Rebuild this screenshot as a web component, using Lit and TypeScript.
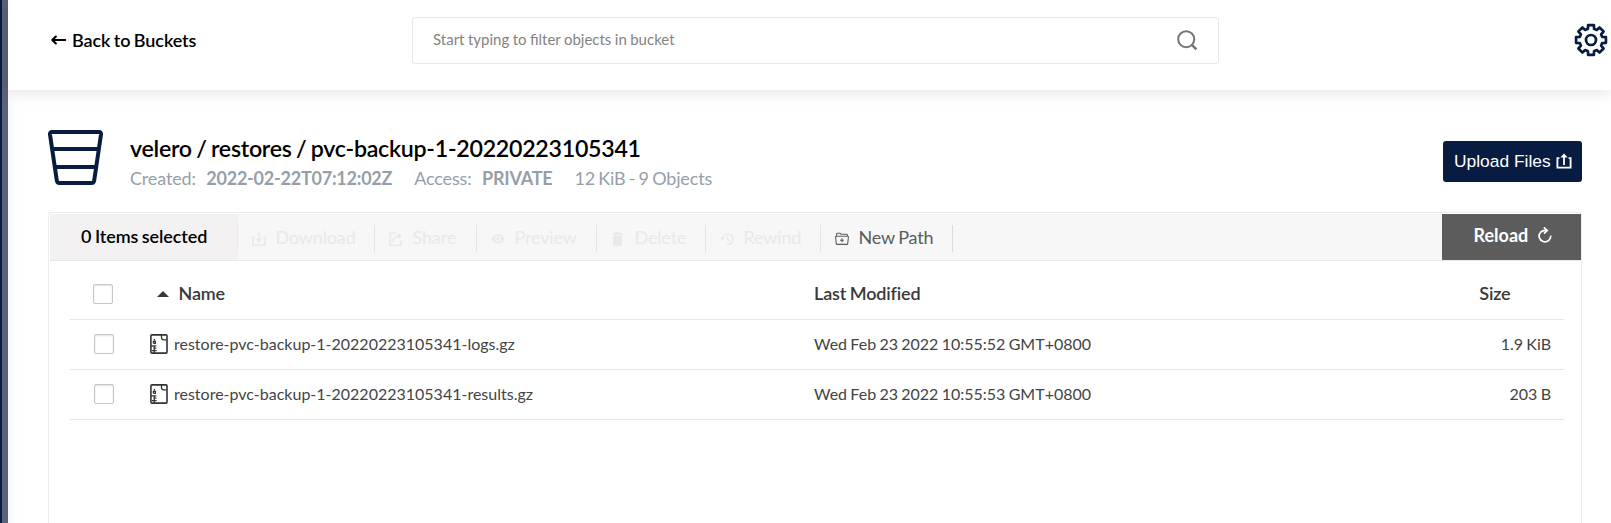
import { LitElement, html, css, svg } from "lit";
import { customElement, property } from "lit/decorators.js";

const gearPath = (() => {
  const pts: string[] = [];
  for (let i = 0; i < 8; i++) {
    const a = (i * Math.PI) / 4;
    const at = (r: number, d: number) =>
      `${(17 + r * Math.sin(a + d)).toFixed(2)} ${(17 - r * Math.cos(a + d)).toFixed(2)}`;
    pts.push(at(11.6, -0.27), at(15.2, -0.19), at(15.2, 0.19), at(11.6, 0.27));
  }
  return `M${pts.join("L")}Z`;
})();

const icons: Record<string, unknown> = {
  back: svg`<svg width="16" height="12" viewBox="0 0 16 12" fill="none" stroke="#000" stroke-width="2.1" stroke-linecap="round" stroke-linejoin="round"><path d="M14.2 6H2M4.8 2.6L1.3 6L4.8 9.4"/></svg>`,
  search: svg`<svg width="21" height="21" viewBox="0 0 21 21" fill="none" stroke="#757575" stroke-width="2"><circle cx="9.2" cy="9.2" r="8"/><path d="M14.6 14.6L19.4 19.4" stroke-width="2.4"/></svg>`,
  gear: svg`<svg width="34" height="34" viewBox="0 0 34 34" fill="none" stroke="#081c42" stroke-width="2.7" stroke-linejoin="round"><path d=${gearPath}/><circle cx="17" cy="17" r="5"/></svg>`,
  bucket: svg`<svg width="55" height="55" viewBox="0 0 55 55" fill="none" stroke="#081c42" stroke-width="4" stroke-linejoin="round"><path d="M4 2H51Q53.3 2 53 4.5L46.2 50.5Q45.8 53 43.5 53H11.5Q9.2 53 8.8 50.5L2 4.5Q1.7 2 4 2ZM5 19H50M8 37H47"/></svg>`,
  upload: svg`<svg width="16" height="16" viewBox="0 0 16 16" fill="none" stroke="#fff" stroke-width="1.8"><path d="M3.4 5.2H1.4V14.6H14.6V5.2H12.6M8 12V2"/><path d="M4.4 4.6L8 .4L11.6 4.6Z" fill="#fff" stroke="none"/></svg>`,
  reload: svg`<svg width="14" height="16" viewBox="0 0 14 16" fill="none" stroke="#fff" stroke-width="1.7"><path d="M2.6 5.2A5.8 5.8 0 1 0 12.7 8.6"/><path d="M2.4 5.4Q4 3.4 8 3.4"/><path d="M5.8 .4L9.2 3.5L6 6.6" /></svg>`,
  download: svg`<svg width="14" height="14" viewBox="0 0 14 14" fill="none" stroke="currentColor" stroke-width="1.6"><path d="M2.8 5.5H.8V13.2H13.2V5.5H11.2M7 .5V8"/><path d="M3.8 6.8H10.2L7 10.6Z" fill="currentColor" stroke="none"/></svg>`,
  share: svg`<svg width="14" height="14" viewBox="0 0 14 14" fill="none" stroke="currentColor" stroke-width="1.4"><path d="M7 .9H1V13.2H12V8.5M3.2 10.5Q4 4.2 11 4"/><path d="M9 .8L13.4 4L9 7.4Z" fill="currentColor" stroke="none"/></svg>`,
  preview: svg`<svg width="14" height="14" viewBox="0 0 14 14"><path fill="currentColor" fill-rule="evenodd" d="M.3 7Q2.5 2.4 7 2.4T13.7 7Q11.5 11.6 7 11.6T.3 7ZM7 4A3 3 0 1 0 7 10A3 3 0 1 0 7 4Z"/><circle cx="7" cy="7" r="1.8" fill="currentColor"/></svg>`,
  delete: svg`<svg width="14" height="14" viewBox="0 0 14 14" fill="currentColor"><path d="M4.3 0H8.9L9.5 1H11.7V2.8H1.5V1H3.7ZM2.1 3.6H11.1V12.4Q11.1 14 9.5 14H3.7Q2.1 14 2.1 12.4Z"/></svg>`,
  rewind: svg`<svg width="14" height="14" viewBox="0 0 14 14" fill="none" stroke="currentColor" stroke-width="1.4"><path d="M2.3 7A5.3 5.3 0 1 1 6.5 12.4M7.4 3.8V7.4L10 9"/><path d="M0 5.8H4.8L2.4 8.8Z" fill="currentColor" stroke="none"/></svg>`,
  folder: svg`<svg width="14" height="14" viewBox="0 0 14 14" fill="none" stroke="currentColor" stroke-width="1.1"><path d="M1.6 4.3V2.2Q1.6 1.3 2.5 1.3H5L6 2.3H11.6Q12.4 2.3 12.4 3.2V4.3M1.2 4.3H12.8Q13.5 4.3 13.4 5L12.7 11.6Q12.6 12.4 11.8 12.4H2.2Q1.4 12.4 1.3 11.6L.6 5Q.5 4.3 1.2 4.3ZM7 6.3V10.3M5 8.3H9" /></svg>`,
  file: svg`<svg width="18" height="20" viewBox="0 0 18 20" fill="none" stroke="#333" stroke-width="1.6"><path d="M2 .9H16Q17 .9 17 2V18Q17 19.1 16 19.1H2Q.9 19.1 .9 18V2Q.9 .9 2 .9Z"/><path d="M11.5 1V3.6Q11.5 5.8 13.7 5.8H16.6" stroke-width="1.3"/><path d="M4.4 5V6.6M3.4 9.2V7.4H5.4V9.4H3.4M1 11.9H6.4M4.2 11.9V19M4.2 14.2H6.4M2 16.6H6.6" stroke-width="1.3"/></svg>`,
};

@customElement("tool-item")
class ToolItem extends LitElement {
  @property() icon = "";
  @property() label = "";
  static styles = css`
    :host { display: block; height: 27px; margin-top: 11px; border-right: 1px solid #e5e5e5; box-sizing: border-box; color: #e9e9e9; font-size: 18px; letter-spacing: -0.15px; word-spacing: -1px; }
    :host([active]) { color: #5c5c5c; border-color: #dcdcdc; }
    .in { display: flex; align-items: center; height: 27px; padding-left: 14px; gap: 9.5px; white-space: nowrap; }
    svg { display: block; flex: none; }
    .t { line-height: 25px; padding-bottom: 2px; }
  `;
  render() {
    return html`<div class="in">${icons[this.icon]}<span class="t">${this.label}</span></div>`;
  }
}

@customElement("app-root")
class AppRoot extends LitElement {
  static styles = css`
    :host { display: flex; height: 523px; width: 100%; overflow: hidden; background: #fff; font-family: Lato, sans-serif; color: #000; box-sizing: border-box; }
    * { box-sizing: border-box; }
    svg { display: block; flex: none; }
    .rail { width: 8px; flex: none; background: #5b6179; border-left: 2px solid #081c42; }
    .main { flex: 1; min-width: 0; display: flex; flex-direction: column; background: linear-gradient(90deg, #f8f8f8, #fefefe 8px, #fff 12px); }
    header { height: 90px; flex: none; display: flex; background: #fff; box-shadow: 0 3px 14px rgba(0,0,0,.11); padding-left: 43px; }
    .back { width: 361px; height: 80px; display: flex; align-items: center; gap: 5px; font-size: 18px; font-weight: 600; letter-spacing: -0.08px; word-spacing: -1px; white-space: nowrap; }
    .search { width: 807px; height: 47px; margin-top: 17px; border: 1px solid #e5e9e9; border-radius: 3px; display: flex; align-items: center; justify-content: space-between; padding: 0 20px 1px 20px; font-size: 15px; word-spacing: -0.4px; color: #838383; }
    .search span { padding-bottom: 2px; }
    .gear { margin: 23px 0 0 355px; }
    .title { display: flex; margin: 40px 29px 0 40px; height: 82px; flex: none; }
    .names { margin: 4px 0 0 27px; flex: 1; white-space: nowrap; }
    h1 { margin: 0 0 1px; font-size: 23.2px; line-height: 28px; font-weight: 600; letter-spacing: -0.27px; word-spacing: -1.1px; }
    .sub { display: flex; font-size: 18px; line-height: 31px; color: #969fa8; letter-spacing: -0.15px; word-spacing: -1.2px; }
    .sub b { margin: 0 22px 0 10.5px; letter-spacing: -0.23px; }
    .upload { width: 139px; height: 41px; margin-top: 11px; border-radius: 3px; background: #081c42; color: #fff; font-family: "Liberation Sans", sans-serif; font-size: 17.4px; display: flex; align-items: center; padding: 0 0 1px 11px; gap: 5.5px; white-space: nowrap; }
    .panel { flex: 1; margin: 0 29px 0 40px; border: 1px solid #eaedee; border-bottom: 0; border-radius: 3px 3px 0 0; padding-top: 1px; }
    .bar { height: 47px; display: flex; background: #f7f7f7; border-bottom: 1px solid #e5e8e8; margin-left: 1px; }
    .sel { width: 188px; background: linear-gradient(#e9e9e9, #e9e9e9) right 9px / 1px 27px no-repeat #f4f1f2; font-size: 18px; font-weight: 600; letter-spacing: -0.1px; word-spacing: -0.8px; line-height: 44px; padding-left: 31px; white-space: nowrap; }
    .reload { margin-left: auto; width: 139px; background: #5c5c5c; color: #fff; font-weight: 700; font-size: 18px; display: flex; align-items: center; padding: 0 0 4px 31.5px; gap: 10px; }
    .w1 { width: 137px; } .w2 { width: 102px; } .w3 { width: 120px; } .w4 { width: 109px; } .w5 { width: 115px; } .w6 { width: 132px; }
    .table { margin: 0 17px 0 21px; color: #444; }
    .row { display: flex; align-items: center; height: 50px; padding-bottom: 1px; border-bottom: 1px solid #e6e8e8; font-size: 16px; line-height: 20px; word-spacing: -0.8px; white-space: nowrap; }
    .head span, .head .date, .head .size { padding-bottom: 2px; }
    .head { height: 59px; font-size: 18px; font-weight: 600; letter-spacing: -0.15px; color: #393939; padding: 9px 0 1px; }
    .box { width: 20px; height: 20px; margin-left: 24px; border: 1px solid #c6c6c6; border-radius: 2px; background: #fff; box-shadow: inset 0 1px 2px rgba(0,0,0,.12); flex: none; }
    .head .box { margin-left: 23px; }
    .name { width: 664px; margin-left: 36px; display: flex; align-items: center; gap: 6px; }
    .head .name { gap: 10px; padding-left: 7.5px; width: 665px; }
    .tri { width: 0; height: 0; border: 6.5px solid transparent; border-top: 0; border-bottom: 6.5px solid #393939; }
    .size { margin-left: auto; padding-right: 13px; }
    .head .size { padding-right: 53.5px; }
  `;

  files = [
    { name: "restore-pvc-backup-1-20220223105341-logs.gz", date: "Wed Feb 23 2022 10:55:52 GMT+0800", size: "1.9 KiB" },
    { name: "restore-pvc-backup-1-20220223105341-results.gz", date: "Wed Feb 23 2022 10:55:53 GMT+0800", size: "203 B" },
  ];

  render() {
    return html`
      <div class="rail"></div>
      <div class="main">
        <header>
          <div class="back">${icons.back}<span class="bt">Back to Buckets</span></div>
          <div class="search"><span>Start typing to filter objects in bucket</span>${icons.search}</div>
          <div class="gear">${icons.gear}</div>
        </header>
        <div class="title">
          ${icons.bucket}
          <div class="names">
            <h1>velero / restores / pvc-backup-1-20220223105341</h1>
            <div class="sub"><span>Created:</span><b>2022-02-22T07:12:02Z</b><span>Access:</span><b>PRIVATE</b><span>12 KiB - 9 Objects</span></div>
          </div>
          <div class="upload"><span>Upload Files</span>${icons.upload}</div>
        </div>
        <div class="panel">
          <div class="bar">
            <div class="sel">0 Items selected</div>
            <tool-item class="w1" icon="download" label="Download"></tool-item>
            <tool-item class="w2" icon="share" label="Share"></tool-item>
            <tool-item class="w3" icon="preview" label="Preview"></tool-item>
            <tool-item class="w4" icon="delete" label="Delete"></tool-item>
            <tool-item class="w5" icon="rewind" label="Rewind"></tool-item>
            <tool-item class="w6" active icon="folder" label="New Path"></tool-item>
            <div class="reload"><span>Reload</span>${icons.reload}</div>
          </div>
          <div class="table">
            <div class="row head">
              <div class="box"></div>
              <div class="name"><i class="tri"></i><span>Name</span></div>
              <div class="date">Last Modified</div>
              <div class="size">Size</div>
            </div>
            ${this.files.map((f) => html`
              <div class="row">
                <div class="box"></div>
                <div class="name">${icons.file}<span>${f.name}</span></div>
                <div class="date">${f.date}</div>
                <div class="size">${f.size}</div>
              </div>`)}
          </div>
        </div>
      </div>
    `;
  }
}
